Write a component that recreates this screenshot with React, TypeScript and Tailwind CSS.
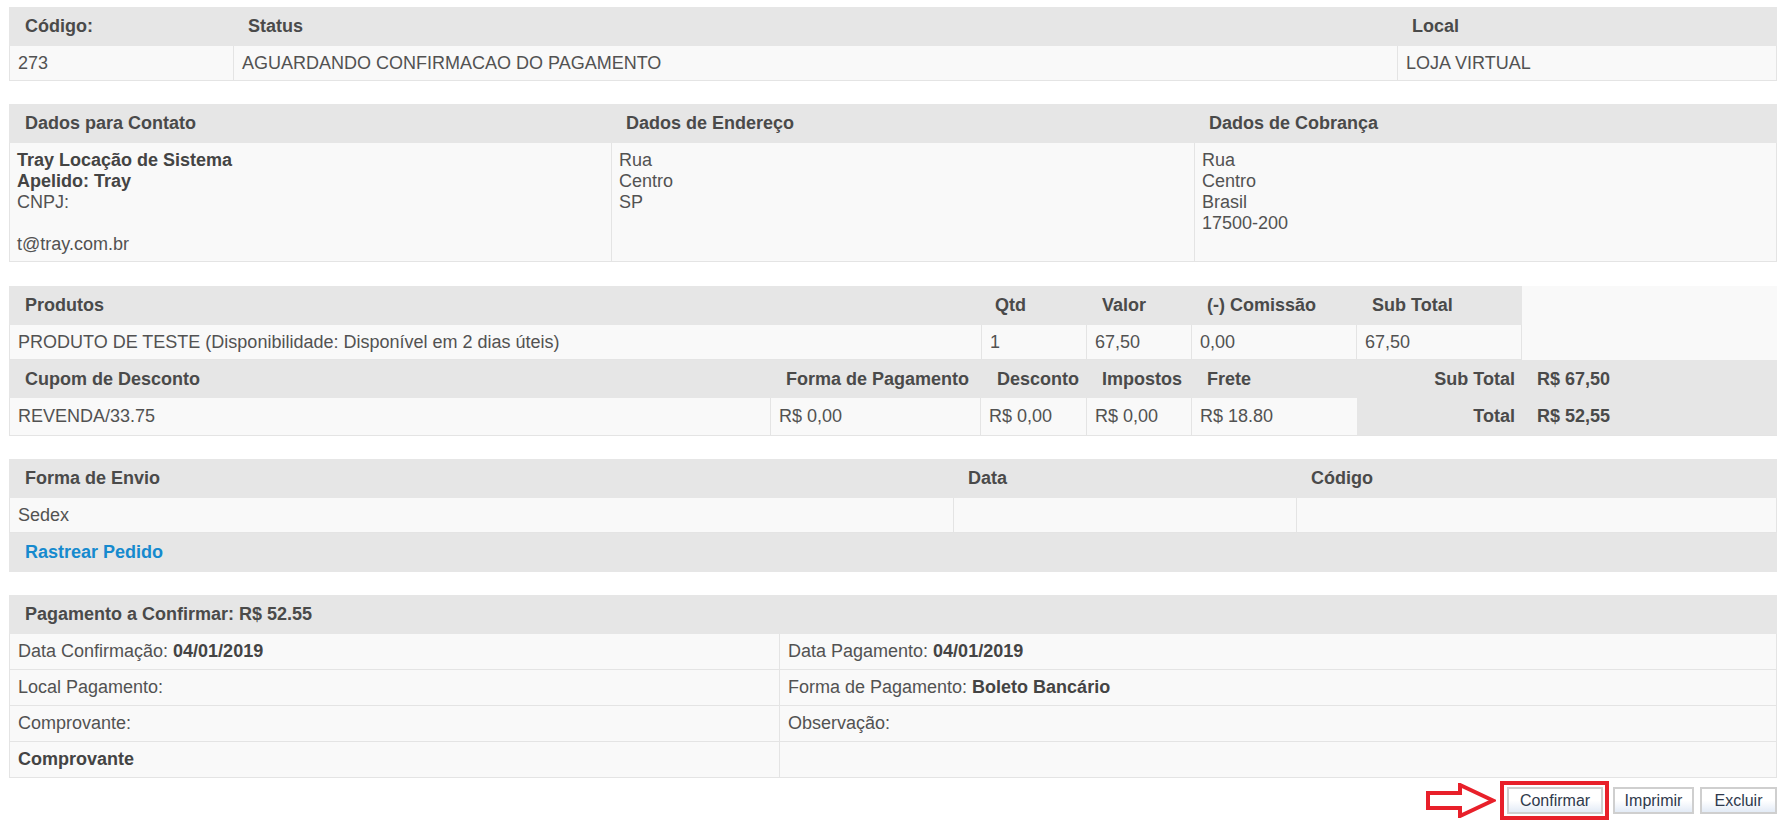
import React from "react";

const hd = "h-[39px] flex items-center pl-[15px] font-bold text-[#4a4a4a] whitespace-nowrap";
const hdf = "h-[39px] flex items-center pl-[16px] font-bold text-[#4a4a4a] whitespace-nowrap";
const cell = "h-[35px] flex items-center px-[8px] bg-[#f9f9f9] border-r border-b border-[#e4e4e4] whitespace-nowrap";
const cell36 = "h-[36px] flex items-center px-[8px] bg-[#f9f9f9] border-r border-b border-[#e4e4e4] whitespace-nowrap";

function Arrow() {
  return (
    <svg width="70" height="35" viewBox="0 0 70 35" className="block">
      <polygon
        points="2,10 34,10 34,2 67,17.5 34,33 34,25 2,25"
        fill="#ffffff"
        stroke="#e8202a"
        strokeWidth="4"
        strokeLinejoin="miter"
      />
    </svg>
  );
}

function Btn({ children, w }: { children: React.ReactNode; w: string }) {
  return (
    <button
      className={
        w +
        " h-[27px] flex items-center justify-center border-2 border-[#cfcfcf] bg-gradient-to-b from-white via-white to-[#e3ebf6] text-[16px] leading-none text-[#2f3a4c] font-['Liberation_Sans',Arial,sans-serif]"
      }
    >
      {children}
    </button>
  );
}

export default function App() {
  return (
    <div className="bg-white min-h-[823px] w-[1784px] pl-[9px] pr-[7px] pt-[7px] text-[18px] leading-[21px] text-[#525252] font-['Liberation_Sans',Arial,sans-serif]">
      {/* Table 1 */}
      <div>
        <div className="bg-[#e6e6e6] grid grid-cols-[224px_1164px_1fr]">
          <div className={hdf}>Código:</div>
          <div className={hd}>Status</div>
          <div className={hd}>Local</div>
        </div>
        <div className="grid grid-cols-[224px_1164px_1fr] border-l border-[#e4e4e4]">
          <div className={cell}>273</div>
          <div className={cell}>AGUARDANDO CONFIRMACAO DO PAGAMENTO</div>
          <div className={cell}>LOJA VIRTUAL</div>
        </div>
      </div>

      {/* Table 2 */}
      <div className="mt-[23px]">
        <div className="bg-[#e6e6e6] grid grid-cols-[602px_583px_1fr]">
          <div className={hdf}>Dados para Contato</div>
          <div className={hd}>Dados de Endereço</div>
          <div className={hd}>Dados de Cobrança</div>
        </div>
        <div className="grid grid-cols-[602px_583px_1fr] border-l border-[#e4e4e4]">
          <div className="h-[119px] pt-[7px] px-[7px] bg-[#f9f9f9] border-r border-b border-[#e4e4e4]">
            <div className="font-bold text-[#444]">Tray Locação de Sistema</div>
            <div className="font-bold text-[#444]">Apelido: Tray</div>
            <div>CNPJ:</div>
            <div>&nbsp;</div>
            <div>t@tray.com.br</div>
          </div>
          <div className="h-[119px] pt-[7px] px-[7px] bg-[#f9f9f9] border-r border-b border-[#e4e4e4]">
            <div>Rua</div>
            <div>Centro</div>
            <div>SP</div>
          </div>
          <div className="h-[119px] pt-[7px] px-[7px] bg-[#f9f9f9] border-r border-b border-[#e4e4e4]">
            <div>Rua</div>
            <div>Centro</div>
            <div>Brasil</div>
            <div>17500-200</div>
          </div>
        </div>
      </div>

      {/* Table 3 */}
      <div className="mt-[24px]">
        <div className="grid grid-cols-[973px_105px_105px_165px_165px_1fr]">
          <div className={hdf + " bg-[#e6e6e6]"}>Produtos</div>
          <div className={"h-[39px] flex items-center pl-[13px] font-bold text-[#4a4a4a] bg-[#e6e6e6]"}>Qtd</div>
          <div className={hd + " bg-[#e6e6e6]"}>Valor</div>
          <div className={hd + " bg-[#e6e6e6]"}>(-) Comissão</div>
          <div className={hd + " bg-[#e6e6e6]"}>Sub Total</div>
          <div className="bg-[#f9f9f9]"></div>
        </div>
        <div className="grid grid-cols-[973px_105px_105px_165px_165px_1fr]">
          <div className={cell + " border-l"}>PRODUTO DE TESTE (Disponibilidade: Disponível em 2 dias úteis)</div>
          <div className={cell}>1</div>
          <div className={cell}>67,50</div>
          <div className={cell}>0,00</div>
          <div className={cell}>67,50</div>
          <div className="bg-[#f9f9f9]"></div>
        </div>
        <div className="grid grid-cols-[762px_210px_106px_105px_165px_1fr] grid-rows-[38px_38px]">
          <div className={"h-[38px] flex items-center pl-[16px] font-bold text-[#4a4a4a] bg-[#e6e6e6]"}>Cupom de Desconto</div>
          <div className={"h-[38px] flex items-center pl-[15px] font-bold text-[#4a4a4a] bg-[#e6e6e6] whitespace-nowrap"}>Forma de Pagamento</div>
          <div className={"h-[38px] flex items-center pl-[16px] font-bold text-[#4a4a4a] bg-[#e6e6e6]"}>Desconto</div>
          <div className={"h-[38px] flex items-center pl-[15px] font-bold text-[#4a4a4a] bg-[#e6e6e6]"}>Impostos</div>
          <div className={"h-[38px] flex items-center pl-[15px] font-bold text-[#4a4a4a] bg-[#e6e6e6]"}>Frete</div>
          <div className="row-span-2 bg-[#e6e6e6] border-b border-[#e4e4e4] grid grid-cols-[165px_1fr] grid-rows-[38px_37px] font-bold text-[#4a4a4a]">
            <div className="flex items-center justify-end pr-[7px]">Sub Total</div>
            <div className="flex items-center pl-[15px]">R$ 67,50</div>
            <div className="flex items-center justify-end pr-[7px]">Total</div>
            <div className="flex items-center pl-[15px]">R$ 52,55</div>
          </div>
          <div className="h-[38px] flex items-center px-[8px] bg-[#f9f9f9] border-l border-r border-b border-[#e4e4e4]">REVENDA/33.75</div>
          <div className="h-[38px] flex items-center px-[8px] bg-[#f9f9f9] border-r border-b border-[#e4e4e4]">R$ 0,00</div>
          <div className="h-[38px] flex items-center px-[8px] bg-[#f9f9f9] border-r border-b border-[#e4e4e4]">R$ 0,00</div>
          <div className="h-[38px] flex items-center px-[8px] bg-[#f9f9f9] border-r border-b border-[#e4e4e4]">R$ 0,00</div>
          <div className="h-[38px] flex items-center px-[8px] bg-[#f9f9f9] border-b border-[#e4e4e4]">R$ 18.80</div>
        </div>
      </div>

      {/* Table 4 */}
      <div className="mt-[23px]">
        <div className="bg-[#e6e6e6] grid grid-cols-[944px_343px_1fr]">
          <div className={hdf}>Forma de Envio</div>
          <div className={hd}>Data</div>
          <div className={hd}>Código</div>
        </div>
        <div className="grid grid-cols-[944px_343px_1fr] border-l border-[#e4e4e4]">
          <div className={cell}>Sedex</div>
          <div className={cell}></div>
          <div className={cell}></div>
        </div>
        <div className="h-[39px] flex items-center pl-[16px] bg-[#e6e6e6]">
          <a className="font-bold text-[#168ace] cursor-pointer">Rastrear Pedido</a>
        </div>
      </div>

      {/* Table 5 */}
      <div className="mt-[23px]">
        <div className="bg-[#e6e6e6]">
          <div className={hdf}>Pagamento a Confirmar: R$ 52.55</div>
        </div>
        <div className="grid grid-cols-[770px_1fr] border-l border-[#e4e4e4]">
          <div className={cell36}>
            Data Confirmação:&nbsp;<span className="font-bold text-[#444]">04/01/2019</span>
          </div>
          <div className={cell36}>
            Data Pagamento:&nbsp;<span className="font-bold text-[#444]">04/01/2019</span>
          </div>
          <div className={cell36}>Local Pagamento:</div>
          <div className={cell36}>
            Forma de Pagamento:&nbsp;<span className="font-bold text-[#444]">Boleto Bancário</span>
          </div>
          <div className={cell36}>Comprovante:</div>
          <div className={cell36}>Observação:</div>
          <div className={cell36}>
            <span className="font-bold text-[#444]">Comprovante</span>
          </div>
          <div className={cell36}></div>
        </div>
      </div>

      {/* Buttons */}
      <div className="mt-[3px] flex items-center justify-end">
        <Arrow />
        <div className="ml-[4px] border-4 border-[#e8202a] pt-[2px] pb-[2px] pl-[3px] pr-[2px] flex">
          <Btn w="w-[96px]">Confirmar</Btn>
        </div>
        <div className="ml-[4px] flex">
          <Btn w="w-[81px]">Imprimir</Btn>
        </div>
        <div className="ml-[6px] flex">
          <Btn w="w-[77px]">Excluir</Btn>
        </div>
      </div>
    </div>
  );
}
